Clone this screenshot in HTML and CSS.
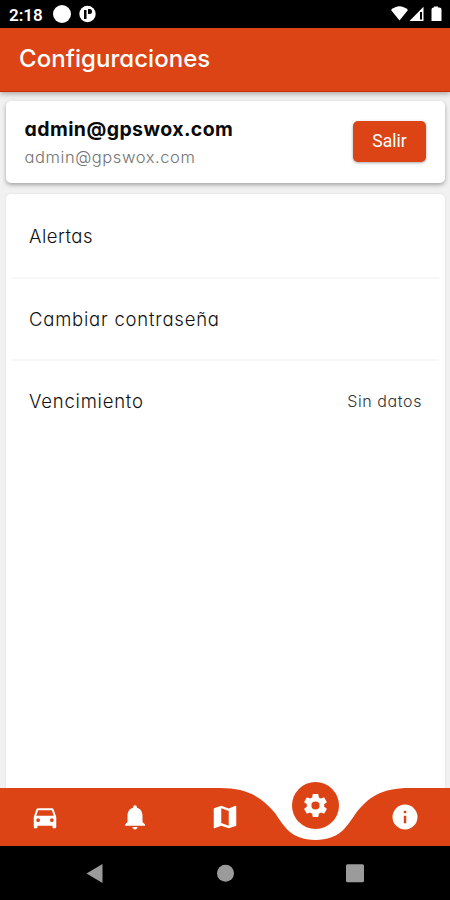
FILE: index.html
```html
<!DOCTYPE html>
<html lang="es">
<head>
<meta charset="utf-8">
<title>Configuraciones</title>
<link rel="stylesheet" href="styles.css">
</head>
<body>
<div class="status">
  <span class="clock">2:18</span>
  <svg class="notices" width="46" height="20" viewBox="0 0 46 20" fill="#fff"><circle cx="9" cy="10" r="9"/><circle cx="34.500" cy="10" r="8.200"/><path d="M31 6h2.500v9h-2.500zM35 5h1.500a2.500 2.500 0 0 1 0 5H35z" fill="#000"/></svg>
  <svg class="signals" width="52" height="18" viewBox="0 0 52 18" fill="#fff"><path d="M1 5Q9.500-2.500 18 5L9.500 15.500z"/><path fill-rule="evenodd" d="M19.500 16L33.500 1.800V16zM30 7v7.500h2V7z"/><path d="M44 1.500h4v1h1.500q2 0 2 2V16H41.500V4.500q0-2 2-2H44z"/></svg>
</div>
<header class="appbar"><h1>Configuraciones</h1></header>
<main class="content">
  <section class="card account">
    <div class="identity">
      <div class="name">admin@gpswox.com</div>
      <div class="email">admin@gpswox.com</div>
    </div>
    <button class="logout">Salir</button>
  </section>
  <section class="card settings">
    <div class="row"><span class="alerts">Alertas</span></div>
    <div class="row"><span class="password">Cambiar contraseña</span></div>
    <div class="row"><span class="expiry">Vencimiento</span><span class="value">Sin datos</span></div>
  </section>
</main>
<nav class="tabs">
  <svg class="wave" width="450" height="58" viewBox="0 0 450 58"><path fill="#dc4415" d="M0 0H220C247 0 262 9 275 25C284 38 291 52 315.500 52C340 52 347 38 356 25C369 9 381 0 410 0H450V58H0z"/></svg>
  <a class="tab"><svg class="icon" viewBox="0 0 24 24"><path d="M18.920 6.010C18.720 5.420 18.160 5 17.500 5h-11c-.66 0-1.210.42-1.420 1.010L3 12v8c0 .55.45 1 1 1h1c.55 0 1-.45 1-1v-1h12v1c0 .55.45 1 1 1h1c.55 0 1-.45 1-1v-8zM6.500 16a1.500 1.500 0 1 1 0-3 1.500 1.500 0 0 1 0 3zm11 0a1.500 1.500 0 1 1 0-3 1.500 1.500 0 0 1 0 3zM5 11l1.500-4.500h11L19 11z"/></svg></a>
  <a class="tab"><svg class="icon" viewBox="0 0 24 24"><path d="M12 22c1.100 0 2-.9 2-2h-4c0 1.100.89 2 2 2zm6-6v-5c0-3.070-1.640-5.640-4.500-6.320V4a1.500 1.500 0 0 0-3 0v.68C7.630 5.360 6 7.920 6 11v5l-2 2v1h16v-1z"/></svg></a>
  <a class="tab"><svg class="icon" viewBox="0 0 24 24"><path d="M20.500 3l-.16.030L15 5.100 9 3 3.360 4.900c-.21.070-.36.250-.36.480V20.500c0 .28.22.5.5.5l.16-.03L9 18.900l6 2.100 5.640-1.900c.21-.07.36-.25.36-.48V3.500c0-.28-.22-.5-.5-.5zM15 19l-6-2.110V5l6 2.110z"/></svg></a>
  <a class="tab active"><span class="bubble"><svg class="icon" viewBox="0 0 24 24"><path d="M19.140 12.940c.04-.3.060-.61.060-.94 0-.32-.02-.64-.07-.94l2.030-1.580c.18-.14.23-.41.12-.61l-1.920-3.320c-.12-.22-.37-.29-.59-.22l-2.390.96c-.5-.38-1.030-.7-1.620-.94l-.36-2.540c-.04-.24-.24-.41-.48-.41h-3.840c-.24 0-.43.17-.47.41l-.36 2.540c-.59.24-1.130.57-1.620.94l-2.390-.96c-.22-.08-.47 0-.59.22L2.740 8.870c-.12.21-.08.47.12.61l2.030 1.580c-.05.3-.09.63-.09.94s.02.64.07.94l-2.030 1.580c-.18.14-.23.41-.12.61l1.920 3.320c.12.22.37.29.59.22l2.390-.96c.5.38 1.030.7 1.620.94l.36 2.540c.05.24.24.41.48.41h3.840c.24 0 .44-.17.47-.41l.36-2.540c.59-.24 1.130-.56 1.620-.94l2.390.96c.22.080.47 0 .59-.22l1.920-3.320c.12-.22.070-.47-.12-.61zM12 15.400a3.400 3.400 0 1 1 0-6.800 3.400 3.400 0 0 1 0 6.800z"/></svg></span></a>
  <a class="tab"><svg class="icon" viewBox="0 0 24 24"><path d="M12 2a10 10 0 1 0 0 20 10 10 0 0 0 0-20zm1 15h-2v-6h2zm0-8h-2V7h2z"/></svg></a>
</nav>
<div class="system">
  <svg width="20" height="22" viewBox="0 0 20 22"><path d="M1.500 11.500L17.500 2V21z"/></svg>
  <svg width="20" height="22" viewBox="0 0 20 22"><circle cx="10.500" cy="11.300" r="8.500"/></svg>
  <svg width="20" height="22" viewBox="0 0 20 22"><rect x="1" y="2.300" width="18" height="18" rx="1.500"/></svg>
</div>
</body>
</html>
```
FILE: styles.css
```css
* { box-sizing: border-box; }
body {
  margin: 0;
  height: 900px;
  display: flex;
  flex-direction: column;
  overflow: hidden;
  background: #f1f1f1;
  font-family: Inter, "Open Sans", sans-serif;
  font-feature-settings: "cv11";
  white-space: nowrap;
}
svg { display: block; }
.status {
  height: 28px;
  flex: none;
  display: flex;
  align-items: center;
  padding: 0 8px 0 9px;
  background: #000;
  color: #fff;
}
.clock { font: 600 17px Roboto, sans-serif; width: 44px; padding-top: 1px; }
.signals { margin-left: auto; }
.appbar {
  height: 64px;
  flex: none;
  display: flex;
  align-items: center;
  padding: 0 19px 3px;
  background: #dc4415;
  border-bottom: 1px solid #cf2c04;
  color: #fff;
  box-shadow: 0 2px 5px rgba(0, 0, 0, .3);
  z-index: 1;
}
h1 { margin: 0; font-size: 24px; font-weight: 500; letter-spacing: .05px; }
.content {
  flex: 1;
  min-height: 0;
  display: flex;
  flex-direction: column;
  gap: 11px;
  padding: 9px 5px 0 6px;
}
.card { background: #fff; border-radius: 5px; }
.account {
  height: 82px;
  flex: none;
  display: flex;
  justify-content: space-between;
  align-items: center;
  padding: 0 19px 0 18.500px;
  box-shadow: 0 2px 4px rgba(0, 0, 0, .32);
}
.identity { padding-top: 2px; }
.name { font-size: 19.500px; line-height: 28px; font-weight: 700; letter-spacing: .42px; color: #0a0a0a; }
.email { font-size: 16.500px; line-height: 28px; font-weight: 300; letter-spacing: .58px; color: #737373; }
.logout {
  width: 73px;
  height: 41px;
  margin-bottom: 1px;
  padding: 0 0 2px;
  border: 0;
  border-radius: 5px;
  background: #dc4415;
  color: #fff;
  font: 400 17.500px Roboto, sans-serif;
  box-shadow: 0 1px 3px rgba(0, 0, 0, .35);
}
.settings { flex: 1; padding: 2px 6px; border-radius: 5px 5px 0 0; box-shadow: 0 0 3px rgba(0, 0, 0, .08); }
.row {
  height: 82.500px;
  display: flex;
  align-items: center;
  justify-content: space-between;
  padding: 0 17px;
  border-bottom: 2px solid #f7f7f7;
  font-size: 18.500px;
  font-weight: 300;
  color: #111;
}
.row:last-child { border: 0; height: 79px; }
.row:first-child { padding-bottom: 1px; }
.alerts { letter-spacing: .5px; }
.password, .expiry { letter-spacing: .78px; }
.value { font-size: 16px; letter-spacing: .6px; color: #333; }
.tabs {
  position: relative;
  height: 58px;
  flex: none;
  display: grid;
  grid-template-columns: repeat(5, 1fr);
  place-items: center;
  background: #fff;
}
.wave { position: absolute; inset: 0; }
.tab { position: relative; }
.icon { width: 30px; height: 30px; fill: #fff; }
.bubble {
  width: 47px;
  height: 47px;
  display: grid;
  place-items: center;
  border-radius: 50%;
  background: #dc4415;
}
.bubble .icon { width: 29px; height: 29px; }
.active { top: -12px; padding-left: 1px; }
.system {
  height: 54px;
  flex: none;
  display: flex;
  justify-content: space-between;
  align-items: center;
  padding: 0 85px;
  background: #000;
  fill: #9b9b9b;
}
```
